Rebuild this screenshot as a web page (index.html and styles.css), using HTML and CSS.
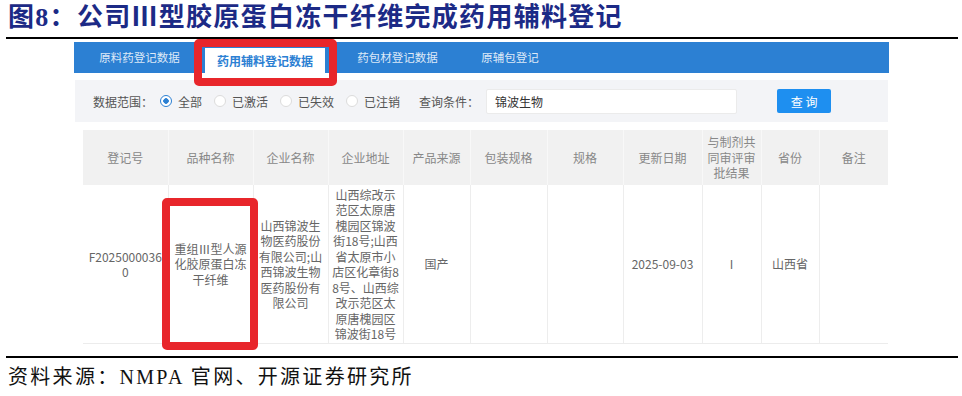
FILE: index.html
```html
<!DOCTYPE html>
<html>
<head>
    <meta charset="utf-8">
    <link rel="stylesheet" href="styles.css">
</head>
<body>
    <div class="head">
        <h1 class="title">图8：公司Ⅲ型胶原蛋白冻干纤维完成药用辅料登记</h1>
    </div>

    <div class="shot">
        <div class="tabs">
            <div class="tab tab-1">原料药登记数据</div>
            <div class="tab tab-active">药用辅料登记数据</div>
            <div class="tab tab-3">药包材登记数据</div>
            <div class="tab tab-4">原辅包登记</div>
        </div>

        <div class="filter">
            <span class="filter-label">数据范围：</span>
            <label class="radio"><span class="dot checked"></span>全部</label>
            <label class="radio"><span class="dot"></span>已激活</label>
            <label class="radio"><span class="dot"></span>已失效</label>
            <label class="radio"><span class="dot"></span>已注销</label>
            <span class="filter-label query-label">查询条件：</span>
            <input type="text" class="query" value="锦波生物">
            <button type="button" class="btn">查 询</button>
        </div>

        <table class="grid">
            <colgroup>
                <col style="width:85px"><col style="width:85px"><col style="width:75px">
                <col style="width:75px"><col style="width:67px"><col style="width:77px">
                <col style="width:76px"><col style="width:79px"><col style="width:59px">
                <col style="width:58px"><col style="width:69px">
            </colgroup>
            <thead>
                <tr>
                    <th>登记号</th>
                    <th>品种名称</th>
                    <th>企业名称</th>
                    <th>企业地址</th>
                    <th>产品来源</th>
                    <th>包装规格</th>
                    <th>规格</th>
                    <th>更新日期</th>
                    <th>与制剂共同审评审批结果</th>
                    <th>省份</th>
                    <th>备注</th>
                </tr>
            </thead>
            <tbody>
                <tr>
                    <td>F20250000360</td>
                    <td class="wide">重组Ⅲ型人源化胶原蛋白冻干纤维</td>
                    <td>山西锦波生物医药股份有限公司;山西锦波生物医药股份有限公司</td>
                    <td>山西综改示范区太原唐槐园区锦波街18号;山西省太原市小店区化章街88号、山西综改示范区太原唐槐园区锦波街18号</td>
                    <td>国产</td>
                    <td></td>
                    <td></td>
                    <td>2025-09-03</td>
                    <td>I</td>
                    <td>山西省</td>
                    <td></td>
                </tr>
            </tbody>
        </table>

        <div class="mark mark-tab"></div>
        <div class="mark mark-cell"></div>
    </div>

    <div class="foot">
        <p class="source">资料来源：NMPA 官网、开源证券研究所</p>
    </div>
</body>
</html>
```

FILE: styles.css
```css
body {
    margin: 0;
    font-family: "Noto Sans CJK SC", sans-serif;
    background: #fff;
}
.head {
    margin: 0 4px 0 6px;
    height: 37px;
    border-bottom: 2px solid #000;
}
.title {
    margin: 0;
    padding: 1px 0 0 2px;
    font-size: 26px;
    line-height: 34px;
    font-weight: 700;
    letter-spacing: 1.3px;
    color: #1c2a86;
    font-family: "Liberation Serif", "Noto Sans CJK SC", serif;
}
.shot {
    position: relative;
    width: 815px;
    margin: 3px 0 0 74px;
    color: #666;
    font-size: 12px;
}
.tabs {
    display: flex;
    align-items: flex-end;
    height: 31px;
    background-color: #2c80d3;
}
.tab {
    height: 31px;
    line-height: 31px;
    text-align: center;
    font-size: 11.5px;
    color: rgba(255, 255, 255, 0.85);
}
.tab-1 {
    width: 131px;
}
.tab-active {
    width: 120px;
    height: 25px;
    line-height: 25px;
    background: #fff;
    color: #2c80d3;
    font-weight: 700;
    font-size: 12px;
}
.tab-3 {
    width: 145px;
}
.tab-4 {
    width: 80px;
}
.filter {
    display: flex;
    align-items: center;
    height: 42px;
    margin: 7px 1px 0 1px;
    padding-left: 18px;
    background: #f3f4f7;
    color: #555;
}
.radio {
    display: flex;
    align-items: center;
    margin-right: 12px;
}
.filter-label {
    margin-right: 7px;
}
.dot {
    box-sizing: border-box;
    width: 12px;
    height: 12px;
    margin-right: 6px;
    border: 1px solid #dcdcdc;
    border-radius: 50%;
    background: #fff;
}
.dot.checked {
    border-color: #2c80d3;
    background: radial-gradient(circle, #2c80d3 0 2.5px, #fff 3px);
}
.query-label {
    margin-left: 7px;
    margin-right: 7px;
}
.query {
    box-sizing: border-box;
    width: 251px;
    height: 25px;
    padding: 0 8px;
    border: 1px solid #ebebeb;
    border-radius: 2px;
    background: #fff;
    font-family: inherit;
    font-size: 12px;
    color: #333;
}
.btn {
    width: 54px;
    height: 24px;
    margin-left: 40px;
    border: none;
    border-radius: 2px;
    background-color: #1e8ff0;
    color: #fff;
    font-family: inherit;
    font-size: 12px;
}
.grid {
    table-layout: fixed;
    width: 805px;
    margin: 8px 0 0 9px;
    border-collapse: collapse;
}
.grid th,
.grid td {
    padding: 0 4px;
    text-align: center;
    vertical-align: middle;
    word-break: break-all;
    line-height: 15.5px;
}
.grid th {
    height: 55px;
    background: #f1f1f1;
    border-left: 1px solid #f8f8f8;
    font-weight: 400;
    color: #888;
}
.grid td {
    height: 158px;
    border-left: 1px solid #ededed;
    border-bottom: 1px solid #ececec;
    padding: 0 3px;
}
.grid td.wide {
    padding: 0 4px;
}
.grid th:first-child,
.grid td:first-child {
    border-left: none;
}
.mark {
    position: absolute;
    box-sizing: border-box;
    border: 8px solid #e8262b;
    border-radius: 5px;
}
.mark-tab {
    left: 120px;
    top: -3px;
    width: 143px;
    height: 47px;
}
.mark-cell {
    left: 88px;
    top: 156px;
    width: 96px;
    height: 152px;
}
.foot {
    margin: 12px 4px 0 6px;
    border-top: 2px solid #000;
}
.source {
    margin: 5px 0 0 2px;
    font-family: "Liberation Serif", "Noto Sans CJK SC", serif;
    font-size: 20px;
    line-height: 28px;
    letter-spacing: 2.3px;
    color: #111;
}
```
